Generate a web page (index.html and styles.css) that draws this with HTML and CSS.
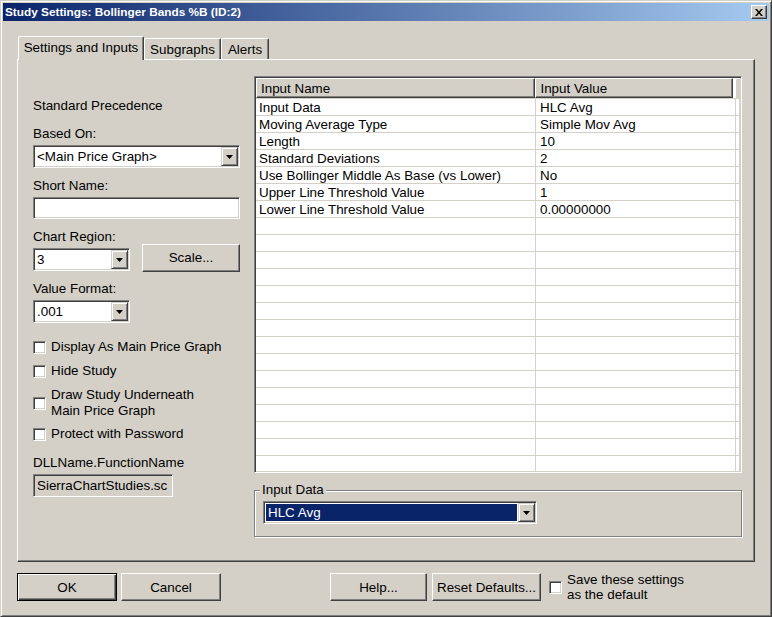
FILE: index.html
```html
<!DOCTYPE html>
<html lang="en">
<head>
  <meta charset="UTF-8" />
  <title>Study Settings: Bollinger Bands %B (ID:2)</title>
  <link rel="stylesheet" href="styles.css">
</head>
<body>

  <div class="window">
    <!-- Title bar -->
    <div class="titlebar">
      <span class="title">Study Settings: Bollinger Bands %B (ID:2)</span>
      <span class="close-btn">
        <svg width="8" height="7" viewBox="0 0 8 7"><path d="M0 0h2l2 2.5L6 0h2L5 3.5 8 7H6L4 4.5 2 7H0l3-3.5z" fill="#000"/></svg>
      </span>
    </div>

    <div class="dialog">
      <!-- Tabs -->
      <div class="tabs">
        <div class="tab active">Settings and Inputs</div>
        <div class="tab tab-sub">Subgraphs</div>
        <div class="tab tab-alerts">Alerts</div>
      </div>

      <div class="panel">
        <!-- Left side -->
        <div class="left-col">
          <div class="label first">Standard Precedence</div>

          <div class="label gap">Based On:</div>
          <div class="combo wide">
            <span class="combo-text">&lt;Main Price Graph&gt;</span>
            <span class="combo-btn"><svg width="7" height="4"><path d="M0 0h7L3.5 4z" fill="#000"/></svg></span>
          </div>

          <div class="label gap">Short Name:</div>
          <div class="textbox"></div>

          <div class="region-row">
            <div>
              <div class="label">Chart Region:</div>
              <div class="combo narrow">
                <span class="combo-text">3</span>
                <span class="combo-btn"><svg width="7" height="4"><path d="M0 0h7L3.5 4z" fill="#000"/></svg></span>
              </div>
            </div>
            <div class="btn scale-btn">Scale...</div>
          </div>

          <div class="label gap">Value Format:</div>
          <div class="combo narrow">
            <span class="combo-text">.001</span>
            <span class="combo-btn"><svg width="7" height="4"><path d="M0 0h7L3.5 4z" fill="#000"/></svg></span>
          </div>

          <div class="check-row first-check"><span class="checkbox"></span><span>Display As Main Price Graph</span></div>
          <div class="check-row"><span class="checkbox"></span><span>Hide Study</span></div>
          <div class="check-row"><span class="checkbox"></span><span>Draw Study Underneath<br>Main Price Graph</span></div>
          <div class="check-row last-check"><span class="checkbox"></span><span>Protect with Password</span></div>

          <div class="label dll">DLLName.FunctionName</div>
          <div class="readonly">SierraChartStudies.sc</div>
        </div>

        <!-- Right side -->
        <div class="right-col">
          <div class="grid">
            <div class="grid-head">
              <div class="hcell c-name">Input Name</div>
              <div class="hcell c-value">Input Value</div>
              <div class="hcell c-rest"></div>
            </div>
            <div class="grid-body">
              <div class="row"><div class="cell c-name">Input Data</div><div class="cell c-value">HLC Avg</div><div class="cell c-rest"></div></div>
              <div class="row"><div class="cell c-name">Moving Average Type</div><div class="cell c-value">Simple Mov Avg</div><div class="cell c-rest"></div></div>
              <div class="row"><div class="cell c-name">Length</div><div class="cell c-value">10</div><div class="cell c-rest"></div></div>
              <div class="row"><div class="cell c-name">Standard Deviations</div><div class="cell c-value">2</div><div class="cell c-rest"></div></div>
              <div class="row"><div class="cell c-name">Use Bollinger Middle As Base (vs Lower)</div><div class="cell c-value">No</div><div class="cell c-rest"></div></div>
              <div class="row"><div class="cell c-name">Upper Line Threshold Value</div><div class="cell c-value">1</div><div class="cell c-rest"></div></div>
              <div class="row"><div class="cell c-name">Lower Line Threshold Value</div><div class="cell c-value">0.00000000</div><div class="cell c-rest"></div></div>
              <div class="row"><div class="cell c-name"></div><div class="cell c-value"></div><div class="cell c-rest"></div></div>
              <div class="row"><div class="cell c-name"></div><div class="cell c-value"></div><div class="cell c-rest"></div></div>
              <div class="row"><div class="cell c-name"></div><div class="cell c-value"></div><div class="cell c-rest"></div></div>
              <div class="row"><div class="cell c-name"></div><div class="cell c-value"></div><div class="cell c-rest"></div></div>
              <div class="row"><div class="cell c-name"></div><div class="cell c-value"></div><div class="cell c-rest"></div></div>
              <div class="row"><div class="cell c-name"></div><div class="cell c-value"></div><div class="cell c-rest"></div></div>
              <div class="row"><div class="cell c-name"></div><div class="cell c-value"></div><div class="cell c-rest"></div></div>
              <div class="row"><div class="cell c-name"></div><div class="cell c-value"></div><div class="cell c-rest"></div></div>
              <div class="row"><div class="cell c-name"></div><div class="cell c-value"></div><div class="cell c-rest"></div></div>
              <div class="row"><div class="cell c-name"></div><div class="cell c-value"></div><div class="cell c-rest"></div></div>
              <div class="row"><div class="cell c-name"></div><div class="cell c-value"></div><div class="cell c-rest"></div></div>
              <div class="row"><div class="cell c-name"></div><div class="cell c-value"></div><div class="cell c-rest"></div></div>
              <div class="row"><div class="cell c-name"></div><div class="cell c-value"></div><div class="cell c-rest"></div></div>
              <div class="row"><div class="cell c-name"></div><div class="cell c-value"></div><div class="cell c-rest"></div></div>
              <div class="row"><div class="cell c-name"></div><div class="cell c-value"></div><div class="cell c-rest"></div></div>
            </div>
          </div>

          <div class="groupbox">
            <span class="group-title">Input Data</span>
            <div class="combo selected">
              <span class="combo-text"><span class="sel">HLC Avg</span></span>
              <span class="combo-btn"><svg width="7" height="4"><path d="M0 0h7L3.5 4z" fill="#000"/></svg></span>
            </div>
          </div>
        </div>
      </div>

      <!-- Bottom buttons -->
      <div class="footer">
        <div class="btn default ok-btn">OK</div>
        <div class="btn cancel-btn">Cancel</div>
        <div class="btn help-btn">Help...</div>
        <div class="btn reset-btn">Reset Defaults...</div>
        <span class="checkbox save-check"></span>
        <span class="save-text">Save these settings<br>as the default</span>
      </div>
    </div>
  </div>

</body>
</html>
```

FILE: styles.css
```css
html, body {
  margin: 0;
  padding: 0;
}

body {
  background: #d4d0c8;
  font-family: "Liberation Sans", Arial, sans-serif;
  font-size: 13.4px;
  color: #000;
}

* {
  box-sizing: border-box;
}

/* window frame */
.window {
  width: 772px;
  height: 617px;
  padding: 2px;
  background: #d4d0c8;
  border: 1px solid;
  border-color: #d4d0c8 #404040 #404040 #d4d0c8;
  box-shadow: inset 1px 1px #fff, inset -1px -1px #808080;
}

.titlebar {
  height: 18px;
  display: flex;
  align-items: center;
  justify-content: space-between;
  padding: 0 2px 0 2px;
  background: linear-gradient(to right, #0a246a, #a6caf0);
}

.title {
  color: #fff;
  font-weight: bold;
  font-size: 11.8px;
  line-height: 18px;
}

.close-btn {
  width: 16px;
  height: 14px;
  display: flex;
  align-items: center;
  justify-content: center;
  background: #d4d0c8;
  border: 1px solid;
  border-color: #fff #404040 #404040 #fff;
  box-shadow: inset -1px -1px #808080;
}

.dialog {
  padding: 15px 14px 0 14px;
}

/* tabs */
.tabs {
  display: flex;
  align-items: flex-end;
  height: 24px;
  margin-bottom: -1px;
  padding-left: 1px;
}

.tab {
  height: 21px;
  margin-bottom: 1px;
  padding-top: 2px;
  line-height: 18px;
  text-align: center;
  background: #d4d0c8;
  border-top: 1px solid #fff;
  border-left: 1px solid #fff;
  border-right: 1px solid #404040;
  border-radius: 2px 2px 0 0;
  box-shadow: inset -1px 0 #808080;
}

.tab.active {
  position: relative;
  z-index: 1;
  width: 126px;
  height: 24px;
  margin-bottom: 0;
  padding-top: 1px;
  line-height: 20px;
}

.tab-sub {
  width: 77px;
}

.tab-alerts {
  width: 48px;
}

/* main panel */
.panel {
  display: flex;
  gap: 14px;
  height: 503px;
  padding: 16px 12px 0 15px;
  border: 1px solid;
  border-color: #fff #404040 #404040 #fff;
  box-shadow: inset -1px -1px #808080;
}

.left-col {
  width: 207px;
  display: flex;
  flex-direction: column;
}

.label {
  height: 16px;
  line-height: 17px;
  white-space: nowrap;
}

.label.first {
  margin-top: 21px;
}

.label.gap {
  margin-top: 9px;
  margin-bottom: 4px;
}

.label.first + .label.gap {
  margin-top: 12px;
}

.region-row .label {
  margin-top: 9px;
  margin-bottom: 4px;
}

.label.dll {
  margin-top: 12px;
  margin-bottom: 4px;
}

/* combo box */
.combo {
  display: flex;
  height: 23px;
  padding: 1px;
  background: #fff;
  border: 1px solid;
  border-color: #808080 #fff #fff #808080;
  box-shadow: inset 1px 1px #404040, inset -1px -1px #d4d0c8;
}

.combo.wide {
  width: 207px;
}

.combo.narrow {
  width: 97px;
}

.combo-text {
  flex: 1;
  padding-left: 2px;
  line-height: 20px;
  white-space: nowrap;
  overflow: hidden;
}

.combo-btn {
  width: 17px;
  height: 19px;
  display: flex;
  align-items: center;
  justify-content: center;
  background: #d4d0c8;
  border: 1px solid;
  border-color: #d4d0c8 #404040 #404040 #d4d0c8;
  box-shadow: inset 1px 1px #fff, inset -1px -1px #808080;
}

.textbox {
  width: 207px;
  height: 22px;
  background: #fff;
  border: 1px solid;
  border-color: #808080 #fff #fff #808080;
  box-shadow: inset 1px 1px #404040, inset -1px -1px #d4d0c8;
}

.readonly {
  width: 140px;
  height: 23px;
  padding-left: 3px;
  line-height: 22px;
  border: 1px solid;
  border-color: #808080 #fff #fff #808080;
  box-shadow: inset 1px 1px #404040, inset -1px -1px #d4d0c8;
}

.region-row {
  display: flex;
  align-items: flex-end;
  justify-content: space-between;
}

/* buttons */
.btn {
  height: 28px;
  display: flex;
  align-items: center;
  justify-content: center;
  background: #d4d0c8;
  border: 1px solid;
  border-color: #fff #404040 #404040 #fff;
  box-shadow: inset -1px -1px #808080;
  white-space: nowrap;
}

.btn.default {
  border: 1px solid #000;
  box-shadow: inset 1px 1px #fff, inset -1px -1px #404040, inset -2px -2px #808080;
}

.scale-btn {
  width: 98px;
  margin-bottom: -1px;
  padding-bottom: 2px;
}

/* checkboxes */
.checkbox {
  flex: none;
  display: inline-block;
  width: 13px;
  height: 13px;
  background: #fff;
  border: 1px solid;
  border-color: #808080 #fff #fff #808080;
  box-shadow: inset 1px 1px #404040, inset -1px -1px #d4d0c8;
}

.check-row {
  display: flex;
  align-items: center;
  gap: 5px;
  margin-top: 8px;
  line-height: 16px;
  white-space: nowrap;
}

.check-row.first-check {
  margin-top: 16px;
}

.check-row.last-check {
  margin-top: 7px;
}

/* input grid */
.right-col {
  width: 488px;
  display: flex;
  flex-direction: column;
}

.grid {
  height: 397px;
  background: #fff;
  border: 1px solid;
  border-color: #808080 #fff #fff #808080;
  box-shadow: inset 1px 1px #404040, inset -1px -1px #d4d0c8;
  padding: 1px;
  overflow: hidden;
}

.grid-head {
  display: flex;
  height: 20px;
}

.hcell {
  height: 20px;
  padding-left: 4px;
  line-height: 19px;
  background: #d4d0c8;
  border: 1px solid;
  border-color: #fff #404040 #404040 #fff;
  box-shadow: inset -1px -1px #808080;
}

.c-name {
  width: 280px;
}

.c-value {
  width: 200px;
}

.c-rest {
  flex: 1;
}

.hcell.c-value {
  width: 198px;
}

.hcell.c-rest {
  border-right: none;
  border-bottom: none;
  box-shadow: none;
  background: #d4d0c8;
  border-left: 1px solid #fff;
  margin-left: 2px;
}

.row {
  display: flex;
  height: 17px;
  border-top: 1px solid #d4d0c8;
}

.cell {
  height: 16px;
  line-height: 17px;
  padding-left: 3px;
  border-right: 1px solid #d4d0c8;
  white-space: nowrap;
  overflow: hidden;
}

.cell.c-value {
  padding-left: 4px;
}

/* group box */
.groupbox {
  height: 47px;
  margin-top: 17px;
  border: 1px solid #808080;
  box-shadow: inset 1px 1px #fff, 1px 1px #fff;
}

.group-title {
  display: block;
  width: max-content;
  margin: -9px 0 0 5px;
  padding: 0 2px;
  line-height: 16px;
  background: #d4d0c8;
}

.combo.selected {
  width: 274px;
  margin: 3px 0 0 8px;
}

.combo.selected .combo-text {
  padding: 1px;
  line-height: 17px;
}

.sel {
  display: block;
  height: 17px;
  padding-left: 2px;
  background: #0a246a;
  color: #fff;
}

/* footer */
.footer {
  display: flex;
  align-items: center;
  margin-top: 10px;
}

.ok-btn {
  width: 100px;
}

.cancel-btn {
  width: 100px;
  margin-left: 4px;
}

.help-btn {
  width: 97px;
  margin-left: 109px;
}

.reset-btn {
  width: 109px;
  margin-left: 5px;
}

.save-check {
  margin-left: 8px;
}

.save-text {
  margin-left: 5px;
  line-height: 15px;
}
```
